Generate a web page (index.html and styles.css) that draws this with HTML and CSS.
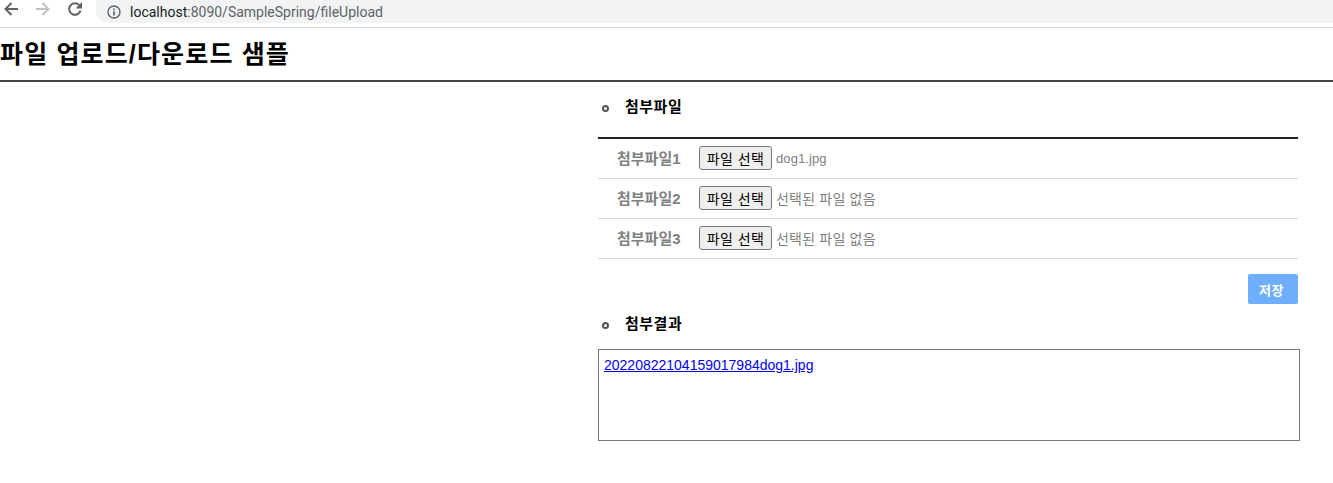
FILE: index.html
```html
<!DOCTYPE html>
<html lang="ko">
<head>
    <meta charset="UTF-8">
    <meta name="viewport" content="width=device-width, initial-scale=1.0">
    <title>파일 업로드/다운로드 샘플</title>
    <link rel="stylesheet" href="styles.css">
</head>
<body>
    <div class="browser-bar">
        <svg class="nav-icon" viewBox="0 0 16 16"><path d="M15 8H3M8.5 2 2.5 8l6 6" fill="none" stroke="#5f6368" stroke-width="2"/></svg>
        <svg class="nav-icon" viewBox="0 0 16 16"><path d="M1 8h12M7.5 2l6 6-6 6" fill="none" stroke="#bdc1c6" stroke-width="2"/></svg>
        <svg class="nav-icon" viewBox="0 0 16 16"><path d="M13.6 9.5A5.8 5.8 0 1 1 12.2 4" fill="none" stroke="#5f6368" stroke-width="2"/><path d="M15 1v6.5H8.5z" fill="#5f6368"/></svg>
        <div class="address">
            <svg class="info-icon" viewBox="0 0 14 14"><circle cx="7" cy="7" r="6" fill="none" stroke="#5f6368" stroke-width="1.4"/><path d="M6.2 6.2h1.6v4.2H6.2zM6.2 3.6h1.6v1.6H6.2z" fill="#5f6368"/></svg>
            <span class="host">localhost</span><span class="path">:8090/SampleSpring/fileUpload</span>
        </div>
    </div>

    <h1 class="page-title">파일 업로드/다운로드 샘플</h1>

    <div class="content">
        <h2 class="section-title">첨부파일</h2>
        <div class="file-table">
            <div class="file-row">
                <span class="file-label">첨부파일1</span>
                <button class="file-button">파일 선택</button>
                <span class="file-name">dog1.jpg</span>
            </div>
            <div class="file-row">
                <span class="file-label">첨부파일2</span>
                <button class="file-button">파일 선택</button>
                <span class="file-name empty">선택된 파일 없음</span>
            </div>
            <div class="file-row">
                <span class="file-label">첨부파일3</span>
                <button class="file-button">파일 선택</button>
                <span class="file-name empty">선택된 파일 없음</span>
            </div>
        </div>
        <div class="actions">
            <button class="save-button">저장</button>
        </div>
        <h2 class="section-title result-title">첨부결과</h2>
        <div class="result-box">
            <a href="#">20220822104159017984dog1.jpg</a>
        </div>
    </div>
</body>
</html>
```

FILE: styles.css
```css
body {
    margin: 0;
    font-family: "Liberation Sans", "Noto Sans CJK KR", sans-serif;
    background-color: #fff;
    color: #000;
}
.browser-bar {
    display: flex;
    align-items: center;
    height: 27px;
    padding-left: 3px;
    border-bottom: 1px solid #dadce0;
    overflow: hidden;
}
.nav-icon {
    flex: none;
    width: 16px;
    height: 16px;
    margin-right: 16px;
    margin-top: -9px;
}
.address {
    display: flex;
    align-items: center;
    flex: 1;
    height: 23px;
    margin-top: -4px;
    margin-left: -3px;
    padding-left: 11px;
    background-color: #f1f3f4;
    border-radius: 0 0 0 12px;
    font-family: "Roboto", sans-serif;
    font-size: 14px;
}
.info-icon {
    width: 14px;
    height: 14px;
    margin-right: 9px;
}
.host {
    color: #202124;
}
.path {
    color: #5f6368;
}
.page-title {
    margin: 0;
    height: 52px;
    line-height: 53px;
    font-size: 25px;
    font-weight: bold;
    letter-spacing: 1.15px;
    border-bottom: 2px solid #444;
}
.content {
    width: 702px;
    margin-left: 598px;
}
.section-title {
    position: relative;
    margin: 0;
    height: 55px;
    line-height: 50px;
    padding-left: 27px;
    font-size: 15px;
    font-weight: bold;
    letter-spacing: 0.5px;
}
.section-title::before {
    content: "";
    position: absolute;
    left: 4px;
    top: 23px;
    box-sizing: border-box;
    width: 7px;
    height: 7px;
    border: 2px solid #555;
    border-radius: 50%;
}
.file-table {
    width: 700px;
    border-top: 2px solid #222;
}
.file-row {
    display: flex;
    align-items: center;
    height: 39px;
    border-bottom: 1px solid #d8d8d8;
}
.file-label {
    width: 101px;
    padding-left: 19px;
    padding-bottom: 2px;
    box-sizing: border-box;
    font-size: 15px;
    font-weight: bold;
    color: #808080;
}
.file-button {
    width: 73px;
    height: 24px;
    padding: 0;
    margin-right: 4px;
    margin-bottom: 2px;
    font-family: inherit;
    font-size: 14px;
    letter-spacing: 0.4px;
    color: #000;
    background-color: #efefef;
    border: 1px solid #767676;
    border-radius: 3px;
}
.file-name {
    font-size: 13px;
    letter-spacing: 0.1px;
    color: #808080;
}
.file-name.empty {
    font-size: 14px;
    letter-spacing: 0.2px;
    margin-bottom: 1px;
}
.actions {
    display: flex;
    justify-content: flex-end;
    width: 700px;
    padding-top: 15px;
}
.save-button {
    width: 50px;
    height: 30px;
    padding: 0 3px 0 0;
    font-family: inherit;
    font-size: 13px;
    font-weight: bold;
    letter-spacing: 0.5px;
    color: #fff;
    background-color: #6eaefc;
    border: none;
    border-radius: 2px;
}
.result-title {
    height: 45px;
    line-height: 40px;
}
.result-title::before {
    top: 18px;
}
.result-box {
    box-sizing: border-box;
    height: 92px;
    padding: 7px 5px;
    border: 1px solid #777;
    font-size: 14px;
}
.result-box a {
    color: #0000ee;
}
```
